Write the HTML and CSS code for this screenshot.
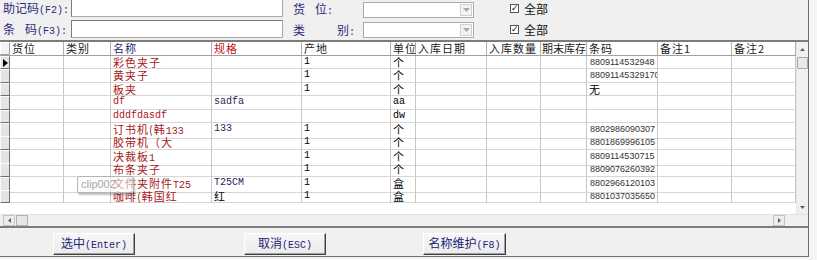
FILE: index.html
```html
<!DOCTYPE html>
<html>
<head>
<meta charset="utf-8">
<link rel="stylesheet" href="styles.css">
</head>
<body>
<div class="win">
  <div class="filters">
    <div class="frow r1">
      <div class="lbl">助记码<span class="lat">(F2):</span></div>
      <div class="inp"></div>
      <div class="lbl2">货<span class="sp1"></span>位<span class="lat">:</span></div>
      <div class="sel"><span class="arr"><svg width="7" height="4" viewBox="0 0 7 4"><path d="M0 0h7L3.5 4z" fill="#a8a8a8"/></svg></span></div>
      <div class="chk"><span class="box">✓</span>全部</div>
    </div>
    <div class="frow r2">
      <div class="lbl">条<span class="sp1"></span>码<span class="lat">(F3):</span></div>
      <div class="inp"></div>
      <div class="lbl2">类<span class="sp2"></span>别<span class="lat">:</span></div>
      <div class="sel"><span class="arr"><svg width="7" height="4" viewBox="0 0 7 4"><path d="M0 0h7L3.5 4z" fill="#a8a8a8"/></svg></span></div>
      <div class="chk"><span class="box">✓</span>全部</div>
    </div>
  </div>

  <div class="grid">
    <div class="gbody">
      <div class="table">
        <div class="row head">
          <div class="rh"></div>
          <div class="c">货位</div>
          <div class="c">类别</div>
          <div class="c blue">名称</div>
          <div class="c red">规格</div>
          <div class="c">产地</div>
          <div class="c">单位</div>
          <div class="c">入库日期</div>
          <div class="c">入库数量</div>
          <div class="c tight">期末库存</div>
          <div class="c">条码</div>
          <div class="c">备注1</div>
          <div class="c">备注2</div>
        </div>
        <div class="row">
          <div class="rh cur"><svg width="5" height="8" viewBox="0 0 5 8"><path d="M0 0l5 4-5 4z" fill="#000"/></svg></div>
          <div class="c"></div><div class="c"></div>
          <div class="c nm">彩色夹子</div><div class="c"></div>
          <div class="c mono">1</div><div class="c">个</div>
          <div class="c"></div><div class="c"></div><div class="c"></div>
          <div class="c bc">8809114532948</div><div class="c"></div><div class="c"></div>
        </div>
        <div class="row">
          <div class="rh"></div>
          <div class="c"></div><div class="c"></div>
          <div class="c nm">黄夹子</div><div class="c"></div>
          <div class="c mono">1</div><div class="c">个</div>
          <div class="c"></div><div class="c"></div><div class="c"></div>
          <div class="c bc">880911453291700</div><div class="c"></div><div class="c"></div>
        </div>
        <div class="row">
          <div class="rh"></div>
          <div class="c"></div><div class="c"></div>
          <div class="c nm">板夹</div><div class="c"></div>
          <div class="c mono">1</div><div class="c">个</div>
          <div class="c"></div><div class="c"></div><div class="c"></div>
          <div class="c">无</div><div class="c"></div><div class="c"></div>
        </div>
        <div class="row">
          <div class="rh"></div>
          <div class="c"></div><div class="c"></div>
          <div class="c nm mono">df</div><div class="c mono spec">sadfa</div>
          <div class="c"></div><div class="c mono">aa</div>
          <div class="c"></div><div class="c"></div><div class="c"></div>
          <div class="c"></div><div class="c"></div><div class="c"></div>
        </div>
        <div class="row">
          <div class="rh"></div>
          <div class="c"></div><div class="c"></div>
          <div class="c nm mono">dddfdasdf</div><div class="c"></div>
          <div class="c"></div><div class="c mono">dw</div>
          <div class="c"></div><div class="c"></div><div class="c"></div>
          <div class="c"></div><div class="c"></div><div class="c"></div>
        </div>
        <div class="row">
          <div class="rh"></div>
          <div class="c"></div><div class="c"></div>
          <div class="c nm">订书机(韩<span class="mono">133</span></div><div class="c mono spec">133</div>
          <div class="c mono">1</div><div class="c">个</div>
          <div class="c"></div><div class="c"></div><div class="c"></div>
          <div class="c bc">8802986090307</div><div class="c"></div><div class="c"></div>
        </div>
        <div class="row">
          <div class="rh"></div>
          <div class="c"></div><div class="c"></div>
          <div class="c nm">胶带机（大</div><div class="c"></div>
          <div class="c mono">1</div><div class="c">个</div>
          <div class="c"></div><div class="c"></div><div class="c"></div>
          <div class="c bc">8801869996105</div><div class="c"></div><div class="c"></div>
        </div>
        <div class="row">
          <div class="rh"></div>
          <div class="c"></div><div class="c"></div>
          <div class="c nm">决裁板<span class="mono">1</span></div><div class="c"></div>
          <div class="c mono">1</div><div class="c">个</div>
          <div class="c"></div><div class="c"></div><div class="c"></div>
          <div class="c bc">8809114530715</div><div class="c"></div><div class="c"></div>
        </div>
        <div class="row">
          <div class="rh"></div>
          <div class="c"></div><div class="c"></div>
          <div class="c nm">布条夹子</div><div class="c"></div>
          <div class="c mono">1</div><div class="c">个</div>
          <div class="c"></div><div class="c"></div><div class="c"></div>
          <div class="c bc">8809076260392</div><div class="c"></div><div class="c"></div>
        </div>
        <div class="row">
          <div class="rh"></div>
          <div class="c"></div><div class="c"></div>
          <div class="c nm">文件夹附件<span class="mono">T25</span></div><div class="c mono spec">T25CM</div>
          <div class="c mono">1</div><div class="c">盒</div>
          <div class="c"></div><div class="c"></div><div class="c"></div>
          <div class="c bc">8802966120103</div><div class="c"></div><div class="c"></div>
        </div>
        <div class="row">
          <div class="rh"></div>
          <div class="c"></div><div class="c"></div>
          <div class="c nm">咖啡(韩国红</div><div class="c">红</div>
          <div class="c mono">1</div><div class="c">盒</div>
          <div class="c"></div><div class="c"></div><div class="c"></div>
          <div class="c bc">8801037035650</div><div class="c"></div><div class="c"></div>
        </div>
        <div class="filler"></div>
        <div class="tip">clip002</div>
      </div>
      <div class="vscroll">
        <div class="vbtn"><svg width="5" height="3" viewBox="0 0 5 3"><path d="M0 3L2.5 0 5 3z" fill="#606060"/></svg></div>
        <div class="vthumb"></div>
        <div class="vspace"></div>
        <div class="vbtn"><svg width="5" height="3" viewBox="0 0 5 3"><path d="M0 0h5L2.5 3z" fill="#606060"/></svg></div>
      </div>
    </div>
    <div class="hscroll">
      <div class="htrack">
        <div class="hbtn"><svg width="3" height="5" viewBox="0 0 3 5"><path d="M3 0v5L0 2.5z" fill="#606060"/></svg></div>
        <div class="hthumb"></div>
        <div class="hspace"></div>
        <div class="hbtn"><svg width="3" height="5" viewBox="0 0 3 5"><path d="M0 0v5L3 2.5z" fill="#606060"/></svg></div>
      </div>
      <div class="corner"></div>
    </div>
  </div>

  <div class="buttons">
    <button class="btn b1">选中<span class="lat">(Enter)</span></button>
    <button class="btn b2">取消<span class="lat">(ESC)</span></button>
    <button class="btn b3">名称维护<span class="lat">(F8)</span></button>
  </div>
</div>
</body>
</html>
```

FILE: styles.css
```css
* { box-sizing: border-box; }
html, body { margin: 0; padding: 0; }
body {
  width: 817px;
  height: 260px;
  overflow: hidden;
  background: #f4f5f7;
  font-family: "Noto Sans CJK SC", sans-serif;
  font-size: 12px;
  color: #000;
}
.win {
  width: 809px;
  height: 258px;
  background: #f0f0f0;
  border-right: 1px solid #6f6f6f;
  border-bottom: 1px solid #6f6f6f;
}
.lat {
  font-family: "Liberation Mono", monospace;
  font-size: 10px;
  letter-spacing: 0;
}
.filters { height: 41px; }
.frow {
  display: flex;
  align-items: flex-start;
  height: 21px;
}
.frow.r1 { margin-top: -1px; height: 21px; }
.frow.r2 { height: 21px; }
.lbl {
  width: 71px;
  padding-left: 3px;
  line-height: 18px;
  color: #2a2a7e;
  white-space: nowrap;
}
.lbl2 {
  width: 70px;
  margin-left: 10px;
  line-height: 18px;
  color: #2a2a7e;
  white-space: nowrap;
  padding-top: 1px;
}
.sp1 { display: inline-block; width: 10px; }
.sp2 { display: inline-block; width: 32px; }
.inp {
  width: 212px;
  height: 18px;
  background: #fff;
  border: 1px solid #a9a9a9;
  border-top-color: #7a7a7a;
  border-left-color: #7a7a7a;
}
.sel {
  width: 111px;
  height: 16px;
  margin-top: 2px;
  background: #fff;
  border: 1px solid #ababab;
  display: flex;
  justify-content: flex-end;
  padding: 1px;
}
.r1 .sel { margin-top: 3px; }
.arr {
  width: 12px;
  height: 12px;
  background: #f3f3f3;
  border: 1px solid #d0d0d0;
  display: flex;
  align-items: center;
  justify-content: center;
}
.chk {
  margin-left: 36px;
  display: flex;
  align-items: center;
  line-height: 18px;
  height: 18px;
  padding-top: 1px;
  color: #111;
}
.box {
  width: 9px;
  height: 9px;
  border: 1px solid #555;
  background: #fff;
  font-family: "DejaVu Sans", sans-serif;
  font-size: 9px;
  line-height: 7px;
  font-weight: bold;
  text-align: center;
  margin-right: 5px;
  color: #111;
  overflow: hidden;
}

.grid {
  width: 808px;
  background: #fff;
  border-top: 2px solid #7c7c7c;
  border-bottom: 2px solid #7c7c7c;
}
.gbody { display: flex; height: 172px; }
.table {
  width: 796px;
  position: relative;
  display: flex;
  flex-direction: column;
}
.row {
  display: grid;
  grid-template-columns: 10px 54px 47px 101px 90px 89px 25px 71px 54px 46px 71px 74px 64px;
  height: 13.4px;
}
.row.head { height: 14px; border-bottom: 1px solid #a0a0a0; }
.c {
  border-right: 1px solid #c6c6c6;
  border-bottom: 1px solid #d6d6d6;
  padding-left: 2px;
  line-height: 12px;
  font-size: 11px;
  letter-spacing: 1px;
  white-space: nowrap;
}
.head .c { border-bottom: none; border-right-color: #b0b0b0; line-height: 13px; color: #1a1a1a; }
.head .tight { letter-spacing: 0; padding-left: 1px; }
.head .blue { color: #23237a; }
.head .red { color: #c41515; }
.rh {
  background: #e4e4e4;
  border: 1px solid;
  border-color: #fafafa #6e6e6e #6e6e6e #fafafa;
  display: flex;
  align-items: center;
  padding-left: 2px;
}
.head .rh { background: #f4f4f4; border-color: #fff #a0a0a0 #a0a0a0 #fff; }
.nm { color: #a81818; }
.mono {
  font-family: "Liberation Mono", monospace;
  font-size: 10px;
  letter-spacing: 0;
}
.spec { color: #27275a; }
.bc {
  font-family: "Liberation Sans", sans-serif;
  font-size: 9px;
  letter-spacing: 0;
  color: #333;
  padding-left: 3px;
  overflow: hidden;
}
.filler { flex: 1; background: #fff; }
.tip {
  position: absolute;
  left: 77px;
  top: 134px;
  width: 57px;
  height: 17px;
  border: 1px solid #b4b4b4;
  border-radius: 2px;
  background: rgba(250, 250, 250, 0.55);
  box-shadow: 1px 2px 2px rgba(0, 0, 0, 0.25);
  font-family: "Liberation Sans", sans-serif;
  font-size: 11px;
  line-height: 15px;
  color: #a8a8a8;
  padding-left: 3px;
}
.vscroll {
  width: 12px;
  background: #f0f0f0;
  border-left: 1px solid #e6e6e6;
  display: flex;
  flex-direction: column;
  padding: 1px 0;
}
.vbtn {
  height: 12px;
  display: flex;
  align-items: center;
  justify-content: center;
}
.vthumb {
  height: 12px;
  margin: 2px 0 0 0;
  background: #e8e8e8;
  border: 1px solid #a8a8a8;
  border-radius: 1px;
}
.vspace { flex: 1; }
.hscroll {
  display: flex;
  height: 12px;
  border-top: 1px solid #e2e2e2;
  background: #f0f0f0;
}
.htrack {
  width: 796px;
  display: flex;
  padding: 0 11px 0 3px;
}
.hbtn {
  width: 12px;
  height: 11px;
  background: #ececec;
  border: 1px solid #c4c4c4;
  display: flex;
  align-items: center;
  justify-content: center;
}
.hthumb {
  width: 12px;
  height: 11px;
  margin-left: 1px;
  background: #e6e6e6;
  border: 1px solid #b4b4b4;
}
.hspace { flex: 1; }
.corner { flex: 1; background: #f0f0f0; }

.buttons {
  height: 28px;
  display: flex;
  align-items: flex-start;
  padding-top: 5px;
}
.btn {
  height: 22px;
  padding: 0;
  margin: 0;
  background: linear-gradient(#f6f6f6, #ececec);
  border: 1px solid;
  border-color: #fff #404040 #404040 #fff;
  box-shadow: inset -1px -1px 0 #a0a0a0;
  font-family: "Noto Sans CJK SC", sans-serif;
  font-size: 12px;
  color: #22227a;
  line-height: 18px;
}
.b1 { width: 82px; margin-left: 53px; }
.b2 { width: 82px; margin-left: 109px; }
.b3 { width: 83px; margin-left: 97px; }
```
